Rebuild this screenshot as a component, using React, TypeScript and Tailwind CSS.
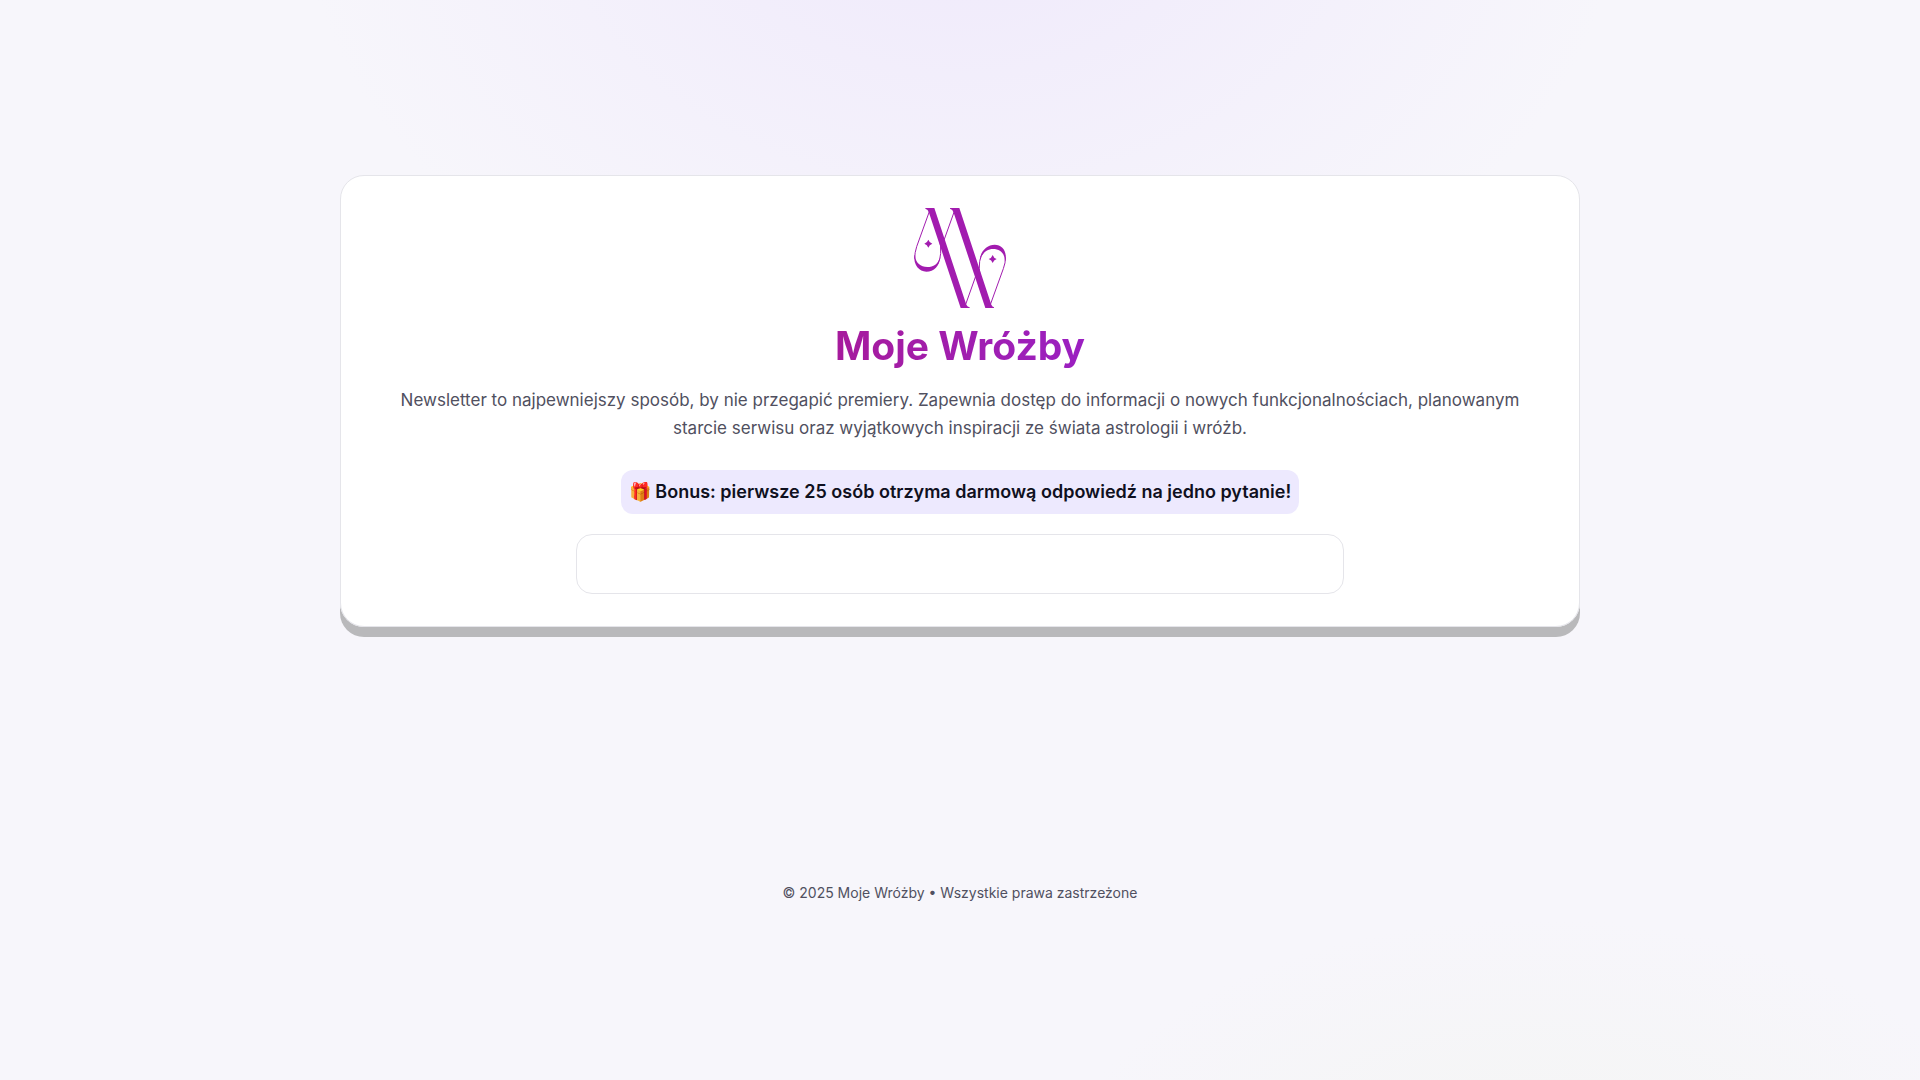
import { useId } from "react";

function Star({ x, y }: { x: number; y: number }) {
    return (
        <path
            transform={`translate(${x} ${y})`}
            d="M0 -12 Q3 -3 12 0 Q3 3 0 12 Q-3 3 -12 0 Q-3 -3 0 -12Z"
        />
    );
}

function Logo() {
    const clip = useId();

    return (
        <svg viewBox="60 54 300 300" className="w-[100px] h-[100px] text-[#a21caf]" fill="currentColor" role="img" aria-label="Moje Wróżby">
            <defs>
                <clipPath id={clip}>
                    <rect x="60" y="54" width="300" height="300" />
                </clipPath>
            </defs>
            <g clipPath={`url(#${clip})`}>
                {/* Diagonal stems with their serifs */}
                <path d="M106 54 H133 L229 344 Q232 351 239 352 V354 H212 L117 68 Q114 58 106 56Z" />
                <path d="M180 54 H208 L304 344 Q307 351 312 352 V354 H286 L191 68 Q188 58 180 56Z" />

                {/* Hairlines */}
                <g fill="none" stroke="currentColor" strokeWidth="3">
                    <path d="M119 62 L80 170 Q74 188 74 206" />
                    <path d="M149 150 Q153 165 152 190 Q151 208 143 222" />
                    <path d="M193 64 L160 156" />
                    <path d="M258 256 L226 346" />
                    <path d="M270 256 Q266 236 269 214 Q272 196 282 186" />
                    <path d="M301 344 L340 236 Q347 218 346 202" />
                </g>

                {/* Bowls */}
                <path d="M73 196 C70 226 88 245 109 245 C132 245 149 228 151 200 C145 222 130 231 112 231 C92 231 77 220 75 196Z" />
                <path d="M347 212 C351 182 336 164 314 164 C292 164 272 182 269 210 C277 187 292 177 309 177 C330 177 343 188 345 212Z" />
                <Star x={115} y={161} />
                <Star x={308} y={207} />
            </g>
        </svg>
    );
}

export default function App() {
    return (
        <div className="min-h-screen bg-[#f7f6fb] bg-[radial-gradient(1100px_800px_at_50%_-10%,#efe9fb_0%,transparent_60%),radial-gradient(800px_450px_at_80%_110%,#f4f5f3_0%,transparent_60%)] font-[Inter,sans-serif] text-[#0f1020]">
            <main className="px-6 pt-[175px]">
                <section className="mx-auto flex max-w-[1240px] flex-col items-center rounded-3xl border border-[#e5e5ea] bg-white/95 p-8 text-center shadow-[0_10px_0_#b9b9bb]">
                    <Logo />
                    <h1 className="mt-3 bg-linear-to-r from-[#a61a9c] to-[#9b1fc1] bg-clip-text text-[39px] leading-[52px] font-bold text-transparent">
                        Moje Wróżby
                    </h1>
                    <p className="mt-[14px] text-[17px] leading-7 text-[#505060]">
                        Newsletter to najpewniejszy sposób, by nie przegapić premiery. Zapewnia dostęp do informacji o nowych funkcjonalnościach, planowanym starcie serwisu oraz wyjątkowych inspiracji ze świata astrologii i wróżb.
                    </p>
                    <p className="mt-7 rounded-xl bg-[#ede9fe] px-2 py-2 text-lg leading-7 font-semibold">
                        🎁 Bonus: pierwsze 25 osób otrzyma darmową odpowiedź na jedno pytanie!
                    </p>
                    <div className="mt-5 h-[60px] w-full max-w-3xl rounded-2xl border border-[#e5e5ea] bg-white" />
                </section>
            </main>
            <footer className="px-6 pt-[254px] pb-8 text-center text-sm leading-6 text-[#505060]">
                © 2025 Moje Wróżby • Wszystkie prawa zastrzeżone
            </footer>
        </div>
    );
}
